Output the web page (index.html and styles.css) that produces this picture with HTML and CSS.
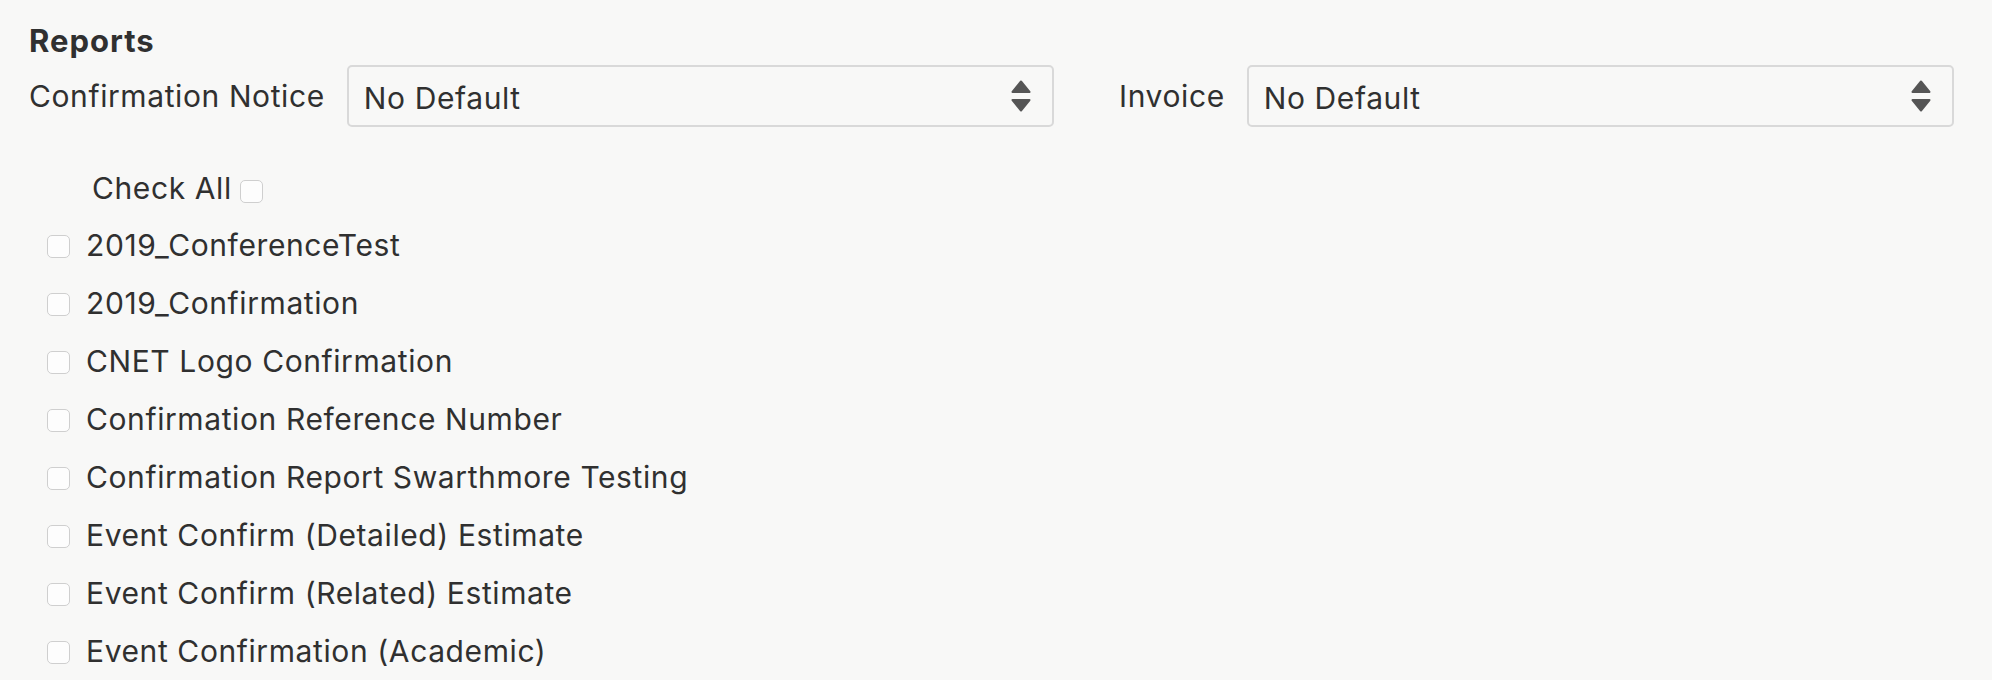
FILE: index.html
```html
<!DOCTYPE html>
<html lang="en">
<head>
<meta charset="utf-8">
<title>Reports</title>
<link rel="stylesheet" href="styles.css">
</head>
<body>
<div class="page">
  <h2 class="title">Reports</h2>
  <div class="defaults">
    <label class="field-label" for="conf">Confirmation Notice</label>
    <div class="select-wrap">
      <select id="conf" class="select"><option>No Default</option></select>
      <svg class="arrows" width="20" height="32" viewBox="0 0 20 32"><path d="M10 1.5 L18.5 12 L1.5 12 Z M1.5 20 L18.5 20 L10 30.5 Z" fill="#555" stroke="#555" stroke-width="2" stroke-linejoin="round"/></svg>
    </div>
    <label class="field-label second" for="inv">Invoice</label>
    <div class="select-wrap">
      <select id="inv" class="select"><option>No Default</option></select>
      <svg class="arrows" width="20" height="32" viewBox="0 0 20 32"><path d="M10 1.5 L18.5 12 L1.5 12 Z M1.5 20 L18.5 20 L10 30.5 Z" fill="#555" stroke="#555" stroke-width="2" stroke-linejoin="round"/></svg>
    </div>
  </div>
  <div class="check-all">
    <span>Check All</span>
    <input type="checkbox" class="cb cb-all" aria-label="Check All">
  </div>
  <ul class="report-list">
    <li class="report"><input type="checkbox" class="cb"><span>2019_ConferenceTest</span></li>
    <li class="report"><input type="checkbox" class="cb"><span>2019_Confirmation</span></li>
    <li class="report"><input type="checkbox" class="cb"><span>CNET Logo Confirmation</span></li>
    <li class="report"><input type="checkbox" class="cb"><span>Confirmation Reference Number</span></li>
    <li class="report"><input type="checkbox" class="cb"><span>Confirmation Report Swarthmore Testing</span></li>
    <li class="report"><input type="checkbox" class="cb"><span>Event Confirm (Detailed) Estimate</span></li>
    <li class="report"><input type="checkbox" class="cb"><span>Event Confirm (Related) Estimate</span></li>
    <li class="report"><input type="checkbox" class="cb"><span>Event Confirmation (Academic)</span></li>
  </ul>
</div>
</body>
</html>
```
FILE: styles.css
```css
html, body {
  margin: 0;
  padding: 0;
  background: #f8f8f7;
}
body {
  font-family: Inter, "Noto Sans", sans-serif;
  font-size: 30px;
  line-height: 34px;
  letter-spacing: 0.6px;
  color: #303030;
  overflow: hidden;
}
.page {
  padding: 0 38px 0 29px;
}
.title {
  margin: 0;
  padding-top: 24px;
  font-size: 31px;
  line-height: 34px;
  letter-spacing: 1px;
  font-weight: 700;
}
.defaults {
  margin-top: 7px;
  display: grid;
  grid-template-columns: auto 1fr auto 1fr;
  align-items: center;
  column-gap: 22px;
}
.field-label.second {
  margin-left: 43px;
}
.select-wrap {
  position: relative;
}
.select {
  appearance: none;
  -webkit-appearance: none;
  display: block;
  width: 100%;
  height: 62px;
  box-sizing: border-box;
  margin: 0;
  padding: 4px 60px 0 15px;
  border: 2px solid #d9d9d9;
  border-radius: 5px;
  background: #f8f8f7;
  font-family: inherit;
  font-size: 30px;
  letter-spacing: 0.6px;
  color: #303030;
}
.arrows {
  position: absolute;
  right: 23px;
  top: 15px;
  pointer-events: none;
}
.check-all {
  margin-top: 44px;
  padding-left: 63px;
  height: 34px;
  display: flex;
  align-items: center;
  gap: 8px;
}
.cb {
  appearance: none;
  -webkit-appearance: none;
  width: 23px;
  height: 23px;
  margin: 0;
  box-sizing: border-box;
  border: 1.5px solid #cfcfcf;
  border-radius: 5px;
  background: #fdfdfd;
  flex: none;
}
.cb-all {
  margin-top: 7px;
}
.report-list {
  list-style: none;
  margin: 11px 0 0;
  padding: 0 0 0 18px;
}
.report {
  height: 58px;
  display: flex;
  align-items: center;
  gap: 16px;
}
.report .cb {
  margin-top: 2px;
}
```
